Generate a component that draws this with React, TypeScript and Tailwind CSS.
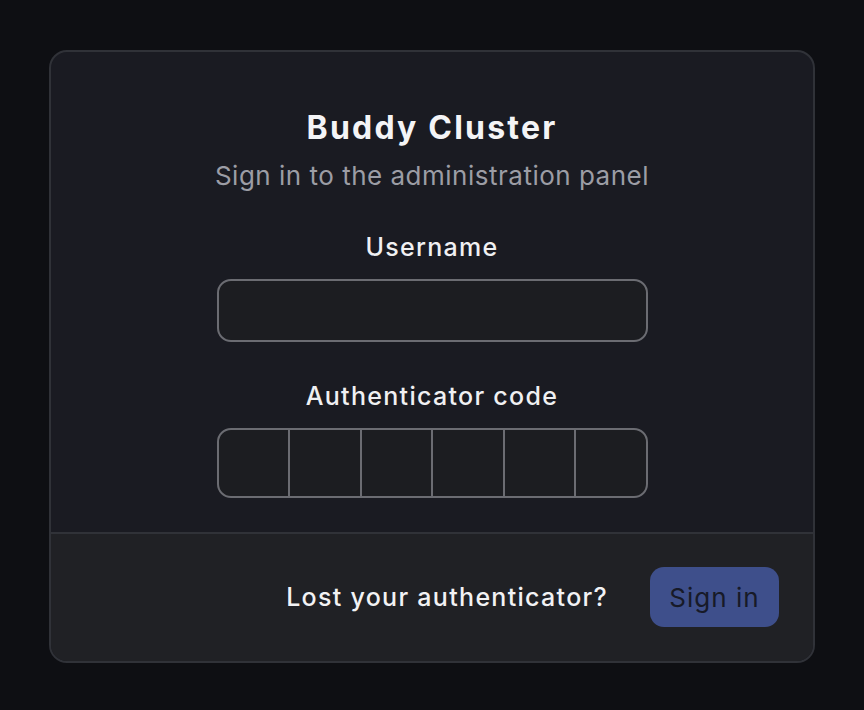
import React from 'react';

const font = { fontFamily: 'Inter, "Noto Sans", sans-serif' };

const OtpInput = () => {
  return <div className="flex w-[431px] h-[70px] rounded-[14px] border-2 border-[#6b6c72] bg-[#1c1d21] overflow-hidden">
      {[0, 1, 2, 3, 4, 5].map(i => <input key={i} maxLength={1} className={`flex-1 min-w-0 bg-transparent outline-none text-center text-2xl text-white ${i > 0 ? 'border-l-2 border-[#6b6c72]' : ''}`} />)}
    </div>;
};

export default function App() {
  return <div className="min-h-[710px] bg-[#0e0f13] px-[49px] pt-[50px] pb-[48px]" style={font}>
      <div className="rounded-[18px] border-2 border-[#303238] bg-[#1a1b22] overflow-hidden">
        {/* Form body */}
        <div className="flex flex-col items-center pt-[56px] pb-[34px]">
          <h1 className="text-[32px] leading-[40px] font-bold text-[#f4f4f6] tracking-[2.2px]">Buddy Cluster</h1>
          <p className="mt-[12px] text-[26px] leading-[32px] text-[#9c9da5] tracking-[0.5px]">Sign in to the administration panel</p>

          <label className="mt-[40px] text-[25px] leading-[30px] font-medium text-[#f0f0f2] tracking-[1.3px]">Username</label>
          <input className="mt-[17px] w-[431px] h-[63px] rounded-[14px] border-2 border-[#6b6c72] bg-[#1c1d21] outline-none px-4 text-xl text-white" />

          <label className="mt-[39px] text-[25px] leading-[30px] font-medium text-[#f0f0f2] tracking-[1.3px]">Authenticator code</label>
          <div className="mt-[17px]">
            <OtpInput />
          </div>
        </div>

        {/* Footer */}
        <div className="flex items-center justify-end gap-[42px] border-t-2 border-[#303238] bg-[#202125] pt-[33px] pb-[34px] pr-[34px]">
          <button className="text-[25px] leading-[30px] font-medium text-[#f2f2f4] tracking-[1.3px]">Lost your authenticator?</button>
          <button className="w-[129px] h-[60px] rounded-[14px] bg-[#3e4f8b] text-[26px] font-normal text-[#171a28] tracking-[1px]">Sign in</button>
        </div>
      </div>
    </div>;
}
